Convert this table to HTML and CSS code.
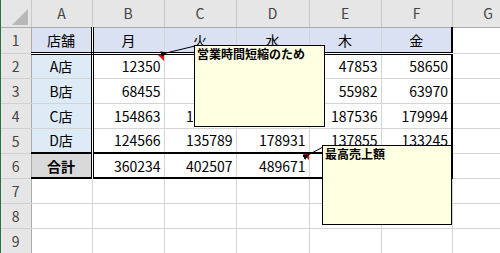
FILE: index.html
```html
<!DOCTYPE html>
<html lang="ja">
<head>
    <meta charset="UTF-8">
    <meta name="viewport" content="width=device-width, initial-scale=1.0">
    <title>売上表</title>
    <link rel="stylesheet" href="styles.css">
</head>
<body>
    <div class="sheet">
        <table class="grid">
            <colgroup>
                <col class="w-row">
                <col class="w-a">
                <col class="w-col">
                <col class="w-col">
                <col class="w-d">
                <col class="w-col">
                <col class="w-f">
                <col class="w-col">
            </colgroup>
            <thead>
                <tr class="r-head">
                    <th class="corner"><svg width="16" height="16" viewBox="0 0 16 16"><polygon points="16,0 16,16 0,16" fill="#b8b8b8"/></svg></th>
                    <th>A</th><th>B</th><th>C</th><th>D</th><th>E</th><th>F</th><th>G</th>
                </tr>
            </thead>
            <tbody>
                <tr class="r1">
                    <th class="num">1</th>
                    <td class="lbl top">店舗</td>
                    <td class="day">月</td>
                    <td class="day">火</td>
                    <td class="day">水</td>
                    <td class="day">木</td>
                    <td class="day last">金</td>
                    <td></td>
                </tr>
                <tr>
                    <th class="num">2</th>
                    <td class="lbl">A店</td>
                    <td class="val has-note">12350</td>
                    <td class="val"></td>
                    <td class="val"></td>
                    <td class="val">47853</td>
                    <td class="val last">58650</td>
                    <td></td>
                </tr>
                <tr>
                    <th class="num">3</th>
                    <td class="lbl">B店</td>
                    <td class="val">68455</td>
                    <td class="val"></td>
                    <td class="val"></td>
                    <td class="val">55982</td>
                    <td class="val last">63970</td>
                    <td></td>
                </tr>
                <tr>
                    <th class="num">4</th>
                    <td class="lbl">C店</td>
                    <td class="val">154863</td>
                    <td class="val">170764</td>
                    <td class="val"></td>
                    <td class="val">187536</td>
                    <td class="val last">179994</td>
                    <td></td>
                </tr>
                <tr class="r5">
                    <th class="num">5</th>
                    <td class="lbl">D店</td>
                    <td class="val">124566</td>
                    <td class="val">135789</td>
                    <td class="val">178931</td>
                    <td class="val">137855</td>
                    <td class="val last">133245</td>
                    <td></td>
                </tr>
                <tr class="r-total">
                    <th class="num">6</th>
                    <td class="lbl sum">合計</td>
                    <td class="val">360234</td>
                    <td class="val">402507</td>
                    <td class="val has-note">489671</td>
                    <td class="val"></td>
                    <td class="val last"></td>
                    <td></td>
                </tr>
                <tr><th class="num">7</th><td></td><td></td><td></td><td></td><td></td><td></td><td></td></tr>
                <tr><th class="num">8</th><td></td><td></td><td></td><td></td><td></td><td></td><td></td></tr>
                <tr><th class="num">9</th><td></td><td></td><td></td><td></td><td></td><td></td><td></td></tr>
            </tbody>
        </table>

        <!-- コメントの引き出し線 -->
        <svg class="leaders" width="500" height="253" viewBox="0 0 500 253">
            <defs>
                <marker id="head" markerWidth="6" markerHeight="6" refX="1" refY="3" orient="auto-start-reverse" markerUnits="userSpaceOnUse">
                    <polygon points="6,0 6,6 0,3" fill="#000"/>
                </marker>
            </defs>
            <line x1="166" y1="53" x2="195" y2="46" stroke="#000" stroke-width="1" marker-start="url(#head)"/>
            <line x1="308" y1="155" x2="323" y2="147" stroke="#000" stroke-width="1" marker-start="url(#head)"/>
        </svg>

        <div class="note note-hours">営業時間短縮のため</div>
        <div class="note note-best">最高売上額</div>
    </div>
</body>
</html>
```

FILE: styles.css
```css
body {
    margin: 0;
    background-color: #fff;
}

.sheet {
    position: relative;
    width: 499px;
    height: 253px;
    overflow: hidden;
    border-left: 1px solid #217346;
    font-family: "Noto Sans CJK JP", "Noto Sans", sans-serif;
    color: #000;
}

/* グリッド */
.grid {
    border-collapse: collapse;
    table-layout: fixed;
    width: 522px;
}

.w-row { width: 30px; }
.w-a { width: 61px; }
.w-col { width: 72px; }
.w-d { width: 73px; }
.w-f { width: 71px; }

.grid td,
.grid th {
    padding: 0;
    border: 1px solid #d4d4d4;
    font-size: 14px;
    font-weight: normal;
    white-space: nowrap;
    overflow: hidden;
    vertical-align: middle;
}

.grid tr { height: 25px; }
.grid .r-head { height: 27px; }
.grid .r1 { height: 26px; }

/* 見出し */
.r-head th {
    background-color: #e6e6e6;
    color: #444;
    border-top: none;
    border-color: #c8c8c8;
    border-bottom-color: #ababab;
    text-align: center;
}

.r-head .corner {
    border-left: none;
    text-align: right;
    vertical-align: bottom;
    line-height: 0;
}

.corner svg {
    margin: 0 3px 2px 0;
}

.num {
    background-color: #e6e6e6;
    color: #444;
    border-left: none !important;
    border-right-color: #ababab !important;
    border-bottom-color: #d0d0d0 !important;
    text-align: center;
}

/* 表の中身 */
.lbl {
    background-color: #ddebf7;
    text-align: center;
    border-right: 3px double #000 !important;
    border-bottom: 1px dotted #000 !important;
}

.lbl.top {
    background-color: #d9e1f2;
}

.day {
    background-color: #d9e1f2;
    text-align: center;
    border-right: 1px dotted #000 !important;
}

.r1 td.lbl,
.r1 td.day {
    border-bottom: 3px double #000 !important;
}

.val {
    text-align: right;
    padding-right: 3px !important;
    border-right: 1px dotted #000 !important;
    border-bottom: 1px dotted #000 !important;
}

.grid .last {
    border-right: 2px solid #000 !important;
}

.r5 td.lbl,
.r5 td.val {
    border-bottom: 2px solid #000 !important;
}

.r-total td.lbl,
.r-total td.val {
    border-bottom: 2px solid #000 !important;
}

.lbl.sum {
    background-color: #d9d9d9;
    font-weight: bold;
}

/* コメント付きセルの赤い三角 */
.has-note {
    position: relative;
}

.has-note::after {
    content: "";
    position: absolute;
    top: 0;
    right: 0;
    border-top: 6px solid #f00;
    border-left: 6px solid transparent;
}

/* コメント */
.leaders {
    position: absolute;
    left: -1px;
    top: 0;
    pointer-events: none;
}

.note {
    position: absolute;
    box-sizing: border-box;
    background-color: #ffffe1;
    border: 1px solid #000;
    padding: 1px 2px;
    font-size: 12px;
    line-height: 14px;
    font-weight: bold;
}

.note-hours {
    left: 193px;
    top: 45px;
    width: 131px;
    height: 82px;
}

.note-best {
    left: 321px;
    top: 145px;
    width: 130px;
    height: 80px;
}
```
